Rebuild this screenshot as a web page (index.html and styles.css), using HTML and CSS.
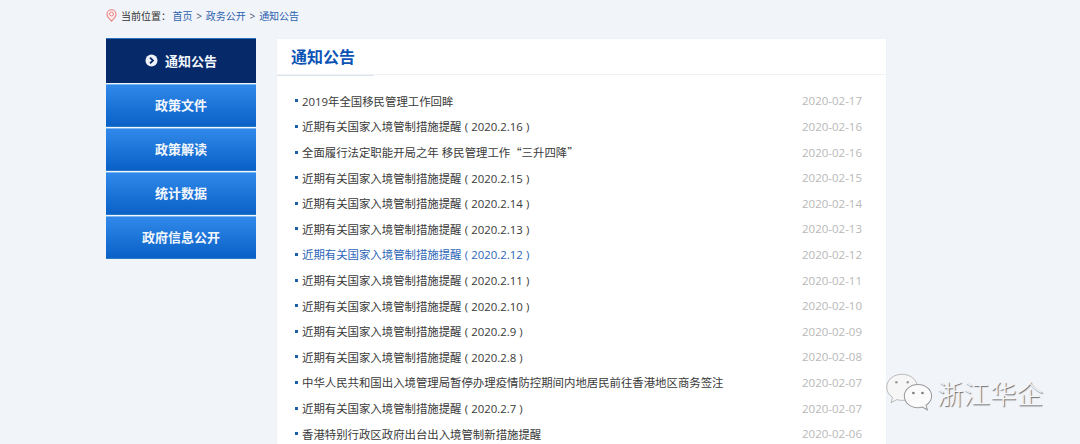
FILE: index.html
```html
<!DOCTYPE html>
<html lang="zh">
<head>
<meta charset="utf-8">
<title>通知公告</title>
<link rel="stylesheet" href="styles.css">
</head>
<body>
<div class="page">
  <div class="crumbs">
    <svg class="pin" width="11" height="13" viewBox="0 0 11 13"><path d="M5.500 12C3 9.600 1 7.600 1 5.200a4.500 4.500 0 0 1 9 0C10 7.600 8 9.600 5.500 12Z" fill="#fdf3f3" stroke="#ec7f80" stroke-width="1.100"/><circle cx="5.500" cy="5" r="2" fill="none" stroke="#ec7f80" stroke-width="1"/></svg>
    <span class="here">当前位置：</span>
    <a class="crumb">首页</a><span class="sep">&gt;</span><a class="crumb">政务公开</a><span class="sep">&gt;</span><a class="crumb">通知公告</a>
  </div>
  <div class="layout">
    <nav class="side">
      <a class="side-item active">
        <svg class="arrow" width="13" height="13" viewBox="0 0 13 13"><circle cx="6.500" cy="6.500" r="6" fill="#eef2f8"/><path d="M5 3.600 8 6.500 5 9.400" fill="none" stroke="#06296a" stroke-width="1.800"/></svg>通知公告</a>
      <a class="side-item">政策文件</a>
      <a class="side-item">政策解读</a>
      <a class="side-item">统计数据</a>
      <a class="side-item">政府信息公开</a>
    </nav>
    <main class="panel">
      <div class="panel-head"><h1 class="panel-title">通知公告</h1></div>
      <ul class="list">
        <li class="row"><span class="dot"></span><a class="link">2019年全国移民管理工作回眸</a><span class="date">2020-02-17</span></li>
        <li class="row"><span class="dot"></span><a class="link">近期有关国家入境管制措施提醒 ( 2020.2.16 )</a><span class="date">2020-02-16</span></li>
        <li class="row"><span class="dot"></span><a class="link">全面履行法定职能开局之年 移民管理工作<span class="cjk">“三升四降”</span></a><span class="date">2020-02-16</span></li>
        <li class="row"><span class="dot"></span><a class="link">近期有关国家入境管制措施提醒 ( 2020.2.15 )</a><span class="date">2020-02-15</span></li>
        <li class="row"><span class="dot"></span><a class="link">近期有关国家入境管制措施提醒 ( 2020.2.14 )</a><span class="date">2020-02-14</span></li>
        <li class="row"><span class="dot"></span><a class="link">近期有关国家入境管制措施提醒 ( 2020.2.13 )</a><span class="date">2020-02-13</span></li>
        <li class="row hover"><span class="dot"></span><a class="link">近期有关国家入境管制措施提醒 ( 2020.2.12 )</a><span class="date">2020-02-12</span></li>
        <li class="row"><span class="dot"></span><a class="link">近期有关国家入境管制措施提醒 ( 2020.2.11 )</a><span class="date">2020-02-11</span></li>
        <li class="row"><span class="dot"></span><a class="link">近期有关国家入境管制措施提醒 ( 2020.2.10 )</a><span class="date">2020-02-10</span></li>
        <li class="row"><span class="dot"></span><a class="link">近期有关国家入境管制措施提醒 ( 2020.2.9 )</a><span class="date">2020-02-09</span></li>
        <li class="row"><span class="dot"></span><a class="link">近期有关国家入境管制措施提醒 ( 2020.2.8 )</a><span class="date">2020-02-08</span></li>
        <li class="row"><span class="dot"></span><a class="link">中华人民共和国出入境管理局暂停办理疫情防控期间内地居民前往香港地区商务签注</a><span class="date">2020-02-07</span></li>
        <li class="row"><span class="dot"></span><a class="link">近期有关国家入境管制措施提醒 ( 2020.2.7 )</a><span class="date">2020-02-07</span></li>
        <li class="row"><span class="dot"></span><a class="link">香港特别行政区政府出台出入境管制新措施提醒</a><span class="date">2020-02-06</span></li>
      </ul>
    </main>
  </div>
</div>
<div class="mark">
  <svg class="mark-icon" width="50" height="40" viewBox="0 0 44 35">
    <path d="M15 1C7.500 1 1.500 6 1.500 12.500c0 3.800 2 6.800 5.200 9l-1.400 4.600 5.200-2.800c1.400.4 3 .7 4.500.7 7.500 0 13.500-5 13.500-11.500S22.500 1 15 1Z" fill="#f6f6f6" stroke="#b4b4b4" stroke-width=".8"/>
    <path d="M29 10c-6.600 0-12 4.500-12 10.200s5.400 10.200 12 10.200c1.400 0 2.700-.2 3.900-.6l4.400 2.500-1.200-4c2.900-1.900 4.900-4.800 4.900-8.100C41 14.500 35.600 10 29 10Z" fill="#fbfbfb" stroke="#999" stroke-width=".9"/>
    <circle cx="10" cy="8" r="1.100" fill="#9a9a9a"/><circle cx="20" cy="8" r="1.100" fill="#9a9a9a"/>
    <circle cx="25" cy="17.500" r="1.200" fill="#808080"/><circle cx="33" cy="17.500" r="1.200" fill="#808080"/>
  </svg>
  <span class="mark-text">浙江华企</span>
</div>
</body>
</html>
```

FILE: styles.css
```css
* { box-sizing: border-box; }
html, body { margin: 0; height: 100%; }
body {
  position: relative;
  height: 444px;
  overflow: hidden;
  background: #f1f4f9;
  font-family: "Open Sans", "Noto Sans CJK SC", sans-serif;
  color: #333;
}
a { text-decoration: none; color: inherit; }
.page { width: 780px; margin-left: 106px; }

.crumbs {
  display: flex;
  align-items: center;
  height: 38px;
  padding-bottom: 7px;
  font-size: 10px;
}
.pin { margin-right: 4px; flex: none; }
.here { color: #333; margin-right: 1.500px; }
.crumb { color: #2d62ae; }
.sep { color: #44536c; margin: 0 3.800px; }

.layout { display: flex; gap: 21px; align-items: flex-start; }

.side { width: 150px; flex: none; display: flex; flex-direction: column; gap: 1px; }
.side-item {
  display: flex;
  align-items: center;
  justify-content: center;
  height: 43px;
  padding-bottom: 2px;
  background: linear-gradient(#3089ea, #0a60c6);
  border-top: 1px solid #78b6f4;
  border-bottom: 1px solid #2a78c8;
  color: #f2f7fd;
  font-size: 13px;
  font-weight: 700;
}
.side-item.active {
  height: 45px;
  background: #06296a;
  border-top: 1px solid #2a70c0;
  border-bottom: none;
}
.arrow { margin-right: 7px; }

.panel {
  width: 609px;
  margin-top: 1px;
  height: 405px;
  background: #fff;
  box-shadow: 0 0 1px rgba(205, 215, 230, .4);
}
.panel-head {
  height: 36px;
  border-bottom: 1px solid #eef1f5;
}
.panel-title {
  display: inline-block;
  margin: 0;
  height: 37px;
  padding: 0 19px 0 14px;
  width: 97px;
  border-bottom: 1px solid #dde3ec;
  line-height: 36px;
  color: #0b54b6;
  font-size: 16px;
  font-weight: 700;
  white-space: nowrap;
}
.list { list-style: none; margin: 0; padding: 13.100px 24px 0 18px; }
.row {
  display: flex;
  align-items: center;
  height: 25.600px;
  font-size: 11.400px;
  color: #3a3a3a;
}
.dot { width: 2.500px; height: 3px; background: #1d5fa8; margin-right: 4.500px; flex: none; }
.link { flex: 1; white-space: nowrap; word-spacing: .2px; }
.cjk { font-family: "Noto Sans CJK SC", sans-serif; }
.date { color: #b8b8b8; font-size: 11.500px; }
.row.hover .link { color: #2d66b8; }

.mark {
  position: absolute;
  left: 885px;
  top: 373px;
  display: flex;
  align-items: center;
  gap: 2px;
}
.mark-text {
  font-family: "Noto Sans CJK SC", sans-serif;
  font-size: 26.500px;
  font-weight: 300;
  line-height: 38px;
  color: #f6f7f9;
  text-shadow: 1px 1px 1px #666;
}
```
